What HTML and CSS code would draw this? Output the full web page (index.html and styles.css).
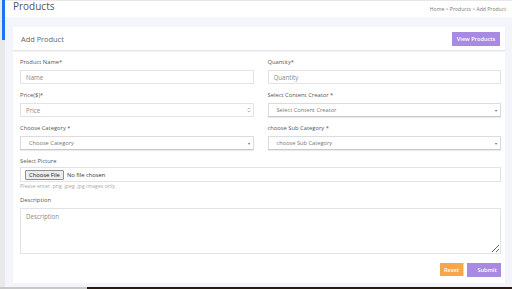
FILE: index.html
```html
<!DOCTYPE html>
<html lang="en">
<head>
    <meta charset="UTF-8">
    <meta name="viewport" content="width=device-width, initial-scale=1.0">
    <title>Add Product</title>
    <link rel="stylesheet" href="styles.css">
</head>
<body>

<div class="page">
    <!-- Sidebar edge -->
    <div class="sidebar">
        <div class="sidebar-bar"></div>
    </div>

    <div class="main">
        <div class="page-header">
            <h1>Products</h1>
            <div class="breadcrumb">Home &gt; Products &gt; Add Product</div>
        </div>

        <div class="content">
            <div class="card">
                <div class="card-header">
                    <span class="card-title">Add Product</span>
                    <button class="btn btn-purple">View Products</button>
                </div>

                <form class="card-body">
                    <div class="form-grid">
                        <div class="field">
                            <label>Product Name*</label>
                            <input class="input" type="text" placeholder="Name">
                        </div>
                        <div class="field">
                            <label>Quantity*</label>
                            <input class="input" type="text" placeholder="Quantity">
                        </div>
                        <div class="field">
                            <label>Price($)*</label>
                            <div class="input-wrap">
                                <input class="input" type="text" placeholder="Price">
                                <svg class="spinner" width="4" height="6" viewBox="0 0 4 6">
                                    <path d="M0.6 2.3 L2 0.9 L3.4 2.3 M0.6 3.7 L2 5.1 L3.4 3.7" fill="none" stroke="#999" stroke-width="0.7"/>
                                </svg>
                            </div>
                        </div>
                        <div class="field">
                            <label>Select Content Creator *</label>
                            <div class="select">Select Content Creator<span class="caret">&#9662;</span></div>
                        </div>
                        <div class="field">
                            <label>Choose Category *</label>
                            <div class="select">Choose Category<span class="caret">&#9662;</span></div>
                        </div>
                        <div class="field">
                            <label>choose Sub Category *</label>
                            <div class="select">choose Sub Category<span class="caret">&#9662;</span></div>
                        </div>
                    </div>

                    <div class="field">
                        <label>Select Picture</label>
                        <div class="file-box">
                            <span class="file-btn">Choose File</span>
                            <span class="file-name">No file chosen</span>
                        </div>
                        <span class="hint">Please enter .png .jpeg .jpg images only.</span>
                    </div>

                    <div class="field">
                        <label>Description</label>
                        <textarea class="textarea" placeholder="Description"></textarea>
                    </div>

                    <div class="actions">
                        <button type="button" class="btn btn-orange">Reset</button>
                        <button type="button" class="btn btn-purple btn-submit">Submit</button>
                    </div>
                </form>
            </div>
        </div>
    </div>
</div>
<div class="taskbar">
    <div class="taskbar-left"></div>
    <div class="taskbar-right"></div>
</div>

</body>
</html>
```

FILE: styles.css
```css
body {
    margin: 0;
    font-family: "Open Sans", Arial, sans-serif;
    background-color: #f4f5fa;
    color: #555;
    overflow: hidden;
}
.page {
    display: flex;
    height: 287px;
}

/* Sidebar edge */
.sidebar {
    width: 5px;
    background-color: #e9e9ec;
    display: flex;
    justify-content: flex-end;
}
.sidebar-bar {
    width: 3px;
    height: 40px;
    background-color: #1e74f0;
}

.main {
    flex: 1;
    display: flex;
    flex-direction: column;
}

/* Page Header */
.page-header {
    height: 17px;
    background-color: #fff;
    border-top: 1px solid #e8e8e8;
    box-sizing: border-box;
    display: flex;
    justify-content: space-between;
    padding: 0 6px 0 8px;
}
.page-header h1 {
    margin: 0;
    font-size: 10px;
    line-height: 11px;
    font-weight: 400;
    color: #555;
}
.breadcrumb {
    font-size: 5.1px;
    color: #777;
    line-height: 16px;
}

.content {
    padding: 10px 7px 0 8px;
}

/* Card */
.card {
    background-color: #fff;
    height: 256px;
    box-sizing: border-box;
}
.card-header {
    height: 24px;
    box-sizing: border-box;
    border-bottom: 1px solid #e4e4e8;
    box-shadow: 0 1px 1px rgba(0, 0, 0, 0.04);
    display: flex;
    align-items: center;
    justify-content: space-between;
    padding: 0 5px 0 8px;
}
.card-title {
    font-size: 7.4px;
    color: #666;
}

.btn {
    border: none;
    color: #fff;
    font-family: "Open Sans", Arial, sans-serif;
    font-weight: 600;
    font-size: 5.6px;
    height: 14px;
    padding: 0;
    cursor: pointer;
}
.btn-purple {
    background-color: #a98ae3;
    width: 48px;
}
.btn-orange {
    background-color: #f9a54a;
    width: 24px;
    height: 13px;
    border-right: 1px solid #fcd6a8;
}
.btn-submit {
    width: 34px;
    padding-left: 6px;
}

.card-body {
    padding: 7px 4px 0 7px;
    display: flex;
    flex-direction: column;
    gap: 7px;
}
.form-grid {
    display: grid;
    grid-template-columns: 1fr 1fr;
    column-gap: 14px;
    row-gap: 7px;
}
.field {
    display: flex;
    flex-direction: column;
}
.field label {
    font-size: 5.8px;
    line-height: 8px;
    color: #555;
    margin-bottom: 4px;
}

.input, .textarea {
    display: block;
    font-family: "Open Sans", Arial, sans-serif;
    font-size: 6.2px;
    color: #555;
    border: 1px solid #e3e3e6;
    padding: 0 5px;
    height: 14px;
    box-sizing: border-box;
    width: 100%;
    margin: 0;
    outline: none;
}
.input::placeholder, .textarea::placeholder {
    color: #8a8a8a;
}
.input-wrap {
    position: relative;
}
.spinner {
    position: absolute;
    right: 3px;
    top: 4px;
}

.select {
    height: 14px;
    box-sizing: border-box;
    border: 1px solid #dcdce0;
    border-bottom-color: #c9c9cd;
    box-shadow: 0 1px 1px rgba(0, 0, 0, 0.08);
    font-size: 5.7px;
    color: #777;
    padding: 0 8px;
    display: flex;
    align-items: center;
    justify-content: space-between;
}
.caret {
    font-size: 4px;
    color: #666;
    margin-right: -5px;
}

/* File Input */
.file-box {
    height: 15px;
    box-sizing: border-box;
    border: 1px solid #e3e3e6;
    display: flex;
    align-items: center;
    padding-left: 4px;
    margin-top: -2px;
}
.file-btn {
    font-size: 5.8px;
    line-height: 8px;
    background-color: #ececec;
    border: 1px solid #8f8f8f;
    border-radius: 1px;
    padding: 0 3px;
    color: #222;
}
.file-name {
    font-size: 5.8px;
    color: #333;
    margin-left: 3px;
}
.hint {
    font-size: 5.2px;
    color: #aaa;
    line-height: 7px;
    margin-top: 1px;
    margin-bottom: -1px;
}

.textarea {
    height: 46px;
    padding: 3px 5px;
    resize: vertical;
}

.actions {
    display: flex;
    justify-content: flex-end;
    gap: 3px;
    margin-top: 2px;
}

/* Bottom taskbar strip */
.taskbar {
    display: flex;
    height: 2px;
}
.taskbar-left {
    width: 87px;
    background-color: #c8c8c8;
}
.taskbar-right {
    flex: 1;
    background-color: #2a1a14;
}
```
